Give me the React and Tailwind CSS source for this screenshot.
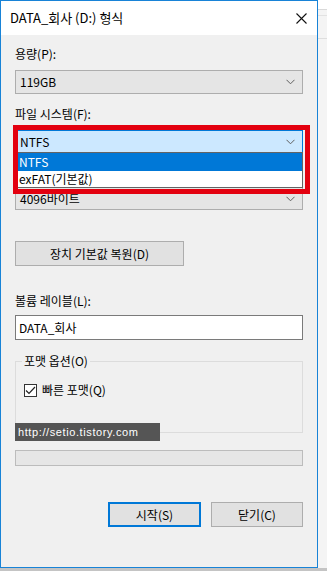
import React from "react";

function Chevron() {
  return (
    <svg width="9" height="6" viewBox="0 0 9 6" fill="none" stroke="#606060" strokeWidth="1">
      <path d="M0.5 0.8 L4.5 4.8 L8.5 0.8" />
    </svg>
  );
}

function Combo({ value, active, h = "h-[24px]" }) {
  return (
    <div
      className={`${h} w-[288px] flex items-center justify-between pl-[4px] pr-[7px] border ${
        active ? "bg-[#cce8ff] border-[#0078d7]" : "bg-[#e5e5e5] border-[#adadad]"
      }`}
    >
      <span className="text-[12px] text-black leading-none">{value}</span>
      <Chevron />
    </div>
  );
}

function Label({ children, className = "" }) {
  return <div className={`h-[16px] leading-[16px] text-[12px] text-black ${className}`}>{children}</div>;
}

export default function App() {
  return (
    <div className="w-[327px] h-[571px] flex flex-col bg-[#c4c4c4] overflow-hidden relative font-['Noto_Sans_CJK_KR',sans-serif]">
      <div className="flex">
        <div className="w-[318px] h-[568px] border border-[#1883d7] bg-[#f0f0f0] flex flex-col">
          {/* title bar */}
          <div className="h-[34px] bg-white flex items-center justify-between pl-[9px] pr-[10px]">
            <span className="text-[13px] text-black">DATA_회사 (D:) 형식</span>
            <svg width="11" height="11" viewBox="0 0 11 11" stroke="#111" strokeWidth="1.1">
              <path d="M0.5 0.5 L10.5 10.5 M10.5 0.5 L0.5 10.5" />
            </svg>
          </div>

          <div className="flex flex-col px-[14px] pt-[11px]">
            <Label>용량(P):</Label>
            <div className="mt-[8px]">
              <Combo value="119GB" />
            </div>

            <Label className="mt-[12px]">파일 시스템(F):</Label>
            <div className="mt-[8px]">
              <Combo value="NTFS" active h="h-[23px]" />
            </div>

            {/* allocation label sits under the open list */}
            <div className="mt-[11px] h-[16px]" />
            <div className="mt-[7px]">
              <Combo value="4096바이트" h="h-[23px]" />
            </div>

            <button className="mt-[31px] w-[169px] h-[25px] bg-[#e1e1e1] border border-[#adadad] text-[12px] text-black flex items-center justify-center">
              장치 기본값 복원(D)
            </button>

            <Label className="mt-[27px]">볼륨 레이블(L):</Label>
            <div className="mt-[6px] w-[288px] h-[25px] bg-white border border-[#7a7a7a] flex items-center pl-[3px]">
              <span className="text-[12px] text-black">DATA_회사</span>
            </div>

            <fieldset className="mt-[13px] w-[288px] h-[80px] border border-[#dcdcdc]">
              <legend className="ml-[6px] px-[2px] text-[12px] leading-[16px] text-black">포맷 옵션(O)</legend>
              <div className="mt-[13px] ml-[8px] flex items-center gap-[5px] h-[16px]">
                <div className="w-[13px] h-[13px] bg-white border border-[#333] flex items-center justify-center">
                  <svg width="11" height="9" viewBox="0 0 11 9" fill="none" stroke="#222" strokeWidth="1.2">
                    <path d="M1 4.5 L4 7.5 L10 1" />
                  </svg>
                </div>
                <span className="text-[12px] text-black">빠른 포맷(Q)</span>
              </div>
            </fieldset>

            <div className="mt-[17px] w-[288px] h-[16px] bg-[#e6e6e6] border border-[#bcbcbc]" />

            <div className="mt-[36px] flex justify-end gap-[10px]">
              <button className="w-[93px] h-[25px] bg-[#e1e1e1] border-2 border-[#0078d7] text-[12px] text-black flex items-center justify-center">
                시작(S)
              </button>
              <button className="w-[92px] h-[25px] bg-[#e1e1e1] border border-[#adadad] text-[12px] text-black flex items-center justify-center">
                닫기(C)
              </button>
            </div>
          </div>
        </div>
        <div className="flex-1 h-[568px] bg-[#f4f4f4] flex flex-col">
          <div className="h-[10px] bg-white border-b border-[#d9d9d9]" />
          <div className="h-[6px] border-b border-[#e2e2e2]" />
          <div className="h-[23px] border-b border-[#dedede]" />
        </div>
      </div>
      <div className="flex-1 bg-[#c4c4c4]" />

      {/* open dropdown list */}
      <div className="absolute left-[15px] top-[152px] w-[288px] h-[36px] bg-white border border-[#646464] flex flex-col">
        <div className="h-[18px] bg-[#0078d7] text-white text-[12px] leading-[18px] pl-[3px]">NTFS</div>
        <div className="h-[16px] text-black text-[12px] leading-[16px] pl-[3px]">exFAT(기본값)</div>
      </div>

      {/* red annotation */}
      <div className="absolute left-[13px] top-[125px] w-[297px] h-[69px] border-[5px] border-[#e3000f]" />

      {/* watermark */}
      <div className="absolute left-[15px] top-[423px] w-[145px] h-[18px] bg-[#555555] flex items-center pl-[3px]">
        <span className="text-[11px] text-white tracking-[0.6px] font-['Liberation_Sans',sans-serif]">http://setio.tistory.com</span>
      </div>
    </div>
  );
}
